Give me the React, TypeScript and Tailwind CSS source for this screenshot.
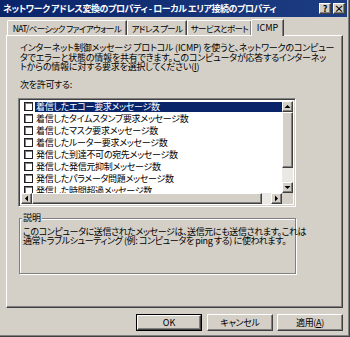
import React from "react";

const F = "font-['Noto_Sans_CJK_JP',sans-serif] [font-feature-settings:'palt']";

const items = [
  "着信したエコー要求メッセージ数",
  "着信したタイムスタンプ要求メッセージ数",
  "着信したマスク要求メッセージ数",
  "着信したルーター要求メッセージ数",
  "発信した到達不可の宛先メッセージ数",
  "発信した発信元抑制メッセージ数",
  "発信したパラメータ問題メッセージ数",
  "発信した時間超過メッセージ数",
];

const raised =
  "border border-t-white border-l-white border-r-[#404040] border-b-[#404040] shadow-[inset_-1px_-1px_0_#808080]";

function Arrow({ dir }: { dir: "up" | "down" | "left" | "right" }) {
  const pts: Record<string, string> = {
    up: "0.5,4 3.5,1 6.5,4",
    down: "0.5,1 3.5,4 6.5,1",
    left: "4,0.5 1,3.5 4,6.5",
    right: "1,0.5 4,3.5 1,6.5",
  };
  const vertical = dir === "up" || dir === "down";
  return (
    <svg width={vertical ? 7 : 5} height={vertical ? 5 : 7} viewBox={vertical ? "0 0 7 5" : "0 0 5 7"}>
      <polygon points={pts[dir]} fill="#000" />
    </svg>
  );
}

function ScrollBtn({ dir }: { dir: "up" | "down" | "left" | "right" }) {
  return (
    <div className={`w-[11px] h-[11px] bg-[#d4d0c8] flex items-center justify-center box-border ${raised}`}>
      <Arrow dir={dir} />
    </div>
  );
}

const tabBase =
  "h-[15px] box-border border-t border-l border-white flex items-center justify-center text-[8.5px] leading-none tracking-[-0.6px] whitespace-nowrap shadow-[inset_-1px_0_0_#808080] border-r border-r-[#404040]";

export default function App() {
  return (
    <div
      className={`${F} w-[350px] h-[337px] bg-[#d4d0c8] text-black flex flex-col overflow-hidden shadow-[inset_-1px_-1px_0_#404040,inset_-2px_-2px_0_#808080]`}
    >
      {/* Title bar */}
      <div className="h-[17px] mr-[3px] flex items-center bg-gradient-to-r from-[#0a246a] to-[#1d3d82] pl-[3px] pr-[2px]">
        <span className="text-white font-bold text-[9px] leading-none tracking-[-0.45px] whitespace-nowrap flex-1">
          ネットワーク アドレス変換のプロパティ - ローカル エリア接続のプロパティ
        </span>
        <div className="flex gap-[2px]">
          <div className={`w-[12px] h-[11px] bg-[#d4d0c8] box-border flex items-center justify-center text-[9px] font-bold leading-none ${raised}`}>
            ?
          </div>
          <div className={`w-[12px] h-[11px] bg-[#d4d0c8] box-border flex items-center justify-center text-[10px] font-bold leading-none ${raised}`}>
            ×
          </div>
        </div>
      </div>

      {/* Tabs */}
      <div className="h-[18px] flex items-end pl-[7px] relative z-10">
        <div className={`w-[120px] rounded-tl-[2px] ${tabBase}`}>NAT/ベーシック ファイアウォール</div>
        <div className={`w-[60px] ${tabBase}`}>アドレス プール</div>
        <div className={`w-[65px] ${tabBase}`}>サービスとポート</div>
        <div className="w-[33px] h-[17px] -mb-[1px] -ml-[1px] bg-[#d4d0c8] box-border border-t border-l border-r border-t-white border-l-white border-r-[#404040] shadow-[inset_-1px_0_0_#808080] rounded-tl-[2px] flex items-center justify-center text-[9px] leading-none whitespace-nowrap pb-[1px]">
          ICMP
        </div>
      </div>

      {/* Panel */}
      <div className={`ml-[6px] mr-[7px] h-[273px] box-border bg-[#d4d0c8] ${raised} pl-[13px] pr-[13px] pt-[7px] flex flex-col`}>
        <div className="text-[9px] leading-[9.5px] tracking-[-0.2px] whitespace-nowrap">
          <div>インターネット制御メッセージ プロトコル (ICMP) を使うと、ネットワークのコンピュー</div>
          <div>タでエラーと状態の情報を共有できます。このコンピュータが応答するインターネッ</div>
          <div>
            トからの情報に対する要求を選択してください(<span className="underline">I</span>)
          </div>
        </div>
        <div className="mt-[8px] text-[9px] leading-[9px] tracking-[-0.3px]">次を許可する:</div>

        {/* List box */}
        <div className="mt-[9px] -ml-[2px] w-[278px] h-[109px] box-border border border-t-[#808080] border-l-[#808080] border-r-white border-b-white shadow-[inset_1px_1px_0_#404040,inset_-1px_-1px_0_#d4d0c8] p-[2px] flex flex-col bg-white">
          <div className="flex flex-1 min-h-0">
            <div className="flex-1 overflow-hidden pl-[3px]">
              {items.map((t, i) => (
                <div key={i} className="h-[12px] flex items-center">
                  <div className="w-[9px] h-[9px] box-border border border-[#202020] bg-white shrink-0 shadow-[inset_1px_1px_0_#808080]" />
                  <div
                    className={`ml-[2px] flex-1 h-[10px] flex items-center text-[9px] leading-none tracking-[-0.3px] whitespace-nowrap pl-[1px] ${
                      i === 0 ? "bg-[#0a246a] text-white" : ""
                    }`}
                  >
                    {t}
                  </div>
                </div>
              ))}
            </div>
            <div className="w-[11px] flex flex-col bg-[#ebe9e5]">
              <ScrollBtn dir="up" />
              <div className={`h-[56px] box-border bg-[#d4d0c8] ${raised}`} />
              <div className="flex-1" />
              <ScrollBtn dir="down" />
            </div>
          </div>
          <div className="h-[11px] flex bg-[#ebe9e5]">
            <ScrollBtn dir="left" />
            <div className={`w-[230px] box-border bg-[#d4d0c8] ${raised}`} />
            <div className="flex-1" />
            <ScrollBtn dir="right" />
            <div className="w-[11px] bg-[#d4d0c8]" />
          </div>
        </div>

        {/* Description group */}
        <div className="mt-[11px] -ml-[1px] w-[277px] h-[56px] box-border border border-[#808080] shadow-[1px_1px_0_#fff,inset_1px_1px_0_#fff] relative pt-[8px] pl-[3px]">
          <div className="absolute -top-[6px] left-[2px] bg-[#d4d0c8] px-[1px] text-[9px] leading-[10px]">説明</div>
          <div className="text-[9px] leading-[9.5px] tracking-[-0.4px] whitespace-nowrap">
            <div>このコンピュータに送信されたメッセージは、送信元にも送信されます。これは</div>
            <div>通常トラブルシューティング (例: コンピュータを ping する) に使われます。</div>
          </div>
        </div>
      </div>

      {/* Buttons */}
      <div className="mt-[6px] flex justify-end pr-[7px] gap-[4px]">
        <div className="w-[66px] h-[17px] box-border border border-black">
          <div className={`w-full h-full box-border ${raised} flex items-center justify-center text-[9px] leading-none`}>
            OK
          </div>
        </div>
        <div className={`ml-[1px] w-[66px] h-[17px] box-border ${raised} flex items-center justify-center text-[9px] leading-none tracking-[-0.3px]`}>
          キャンセル
        </div>
        <div className={`w-[66px] h-[17px] box-border ${raised} flex items-center justify-center text-[9px] leading-none tracking-[-0.3px]`}>
          適用(<span className="underline">A</span>)
        </div>
      </div>
    </div>
  );
}
